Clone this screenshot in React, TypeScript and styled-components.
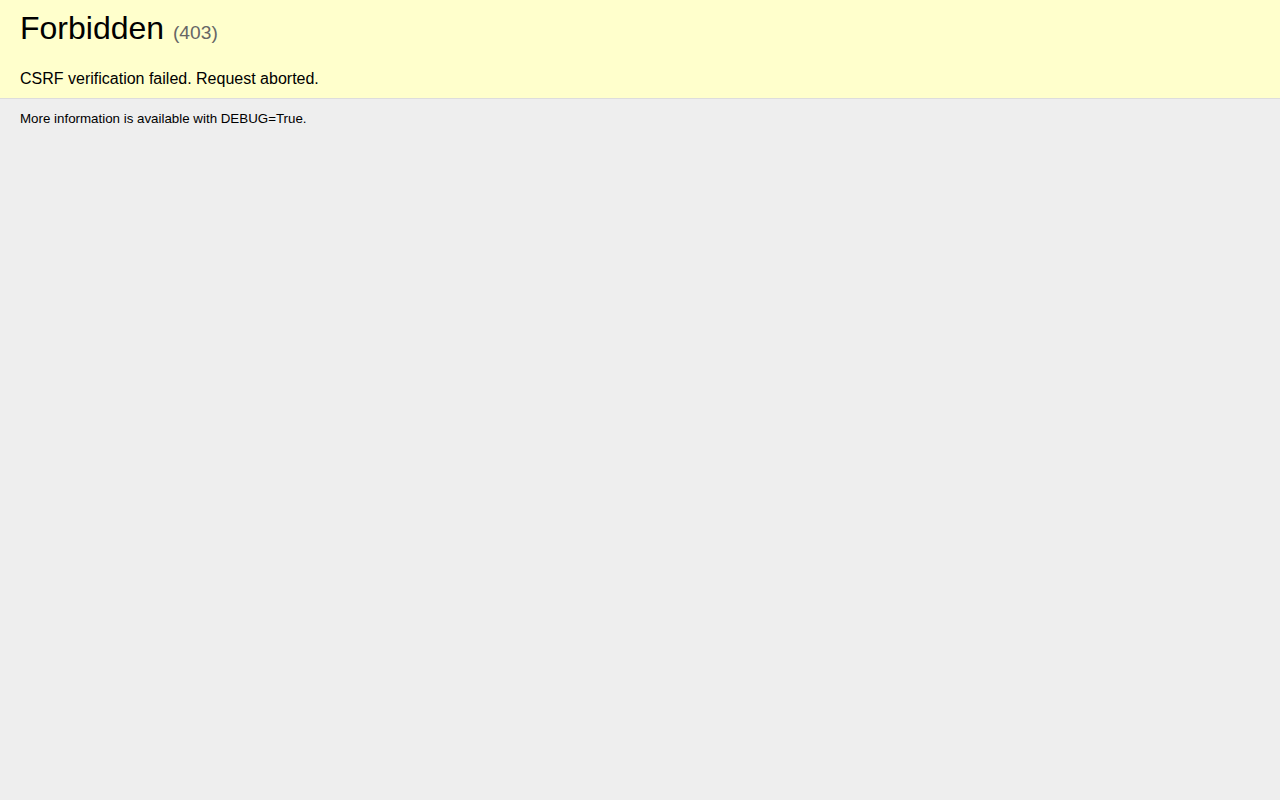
import React from "react";
import styled, { createGlobalStyle } from "styled-components";

const Global = createGlobalStyle`
  html, body { margin: 0; padding: 0; }
  body {
    background: #eee;
    color: #000;
    font-family: "Liberation Sans", Arial, Helvetica, sans-serif;
    font-size: 16px;
  }
  * { box-sizing: content-box; }
`;

const Summary = styled.div`
  background: #ffc;
  padding: 10px 20px;
  border-bottom: 1px solid #ddd;
`;

const Explanation = styled.div`
  background: #eee;
  padding: 10px 20px;
`;

const Title = styled.h1`
  margin: 0 0 0.4em 0;
  padding: 0;
  font-size: 32px;
  font-weight: normal;
  line-height: normal;
`;

const Code = styled.span`
  font-size: 60%;
  color: #666;
  font-weight: normal;
`;

const Para = styled.p<{ $pad?: boolean }>`
  margin: 0;
  padding: ${(p) => (p.$pad ? "10px 0 0 0" : "0")};
  line-height: normal;
`;

const Small = styled.small`
  font-size: smaller;
`;

export default function App() {
  return (
    <>
      <Global />
      <Summary>
        <Title>
          Forbidden <Code>(403)</Code>
        </Title>
        <Para $pad>CSRF verification failed. Request aborted.</Para>
      </Summary>
      <Explanation>
        <Para>
          <Small>More information is available with DEBUG=True.</Small>
        </Para>
      </Explanation>
    </>
  );
}
